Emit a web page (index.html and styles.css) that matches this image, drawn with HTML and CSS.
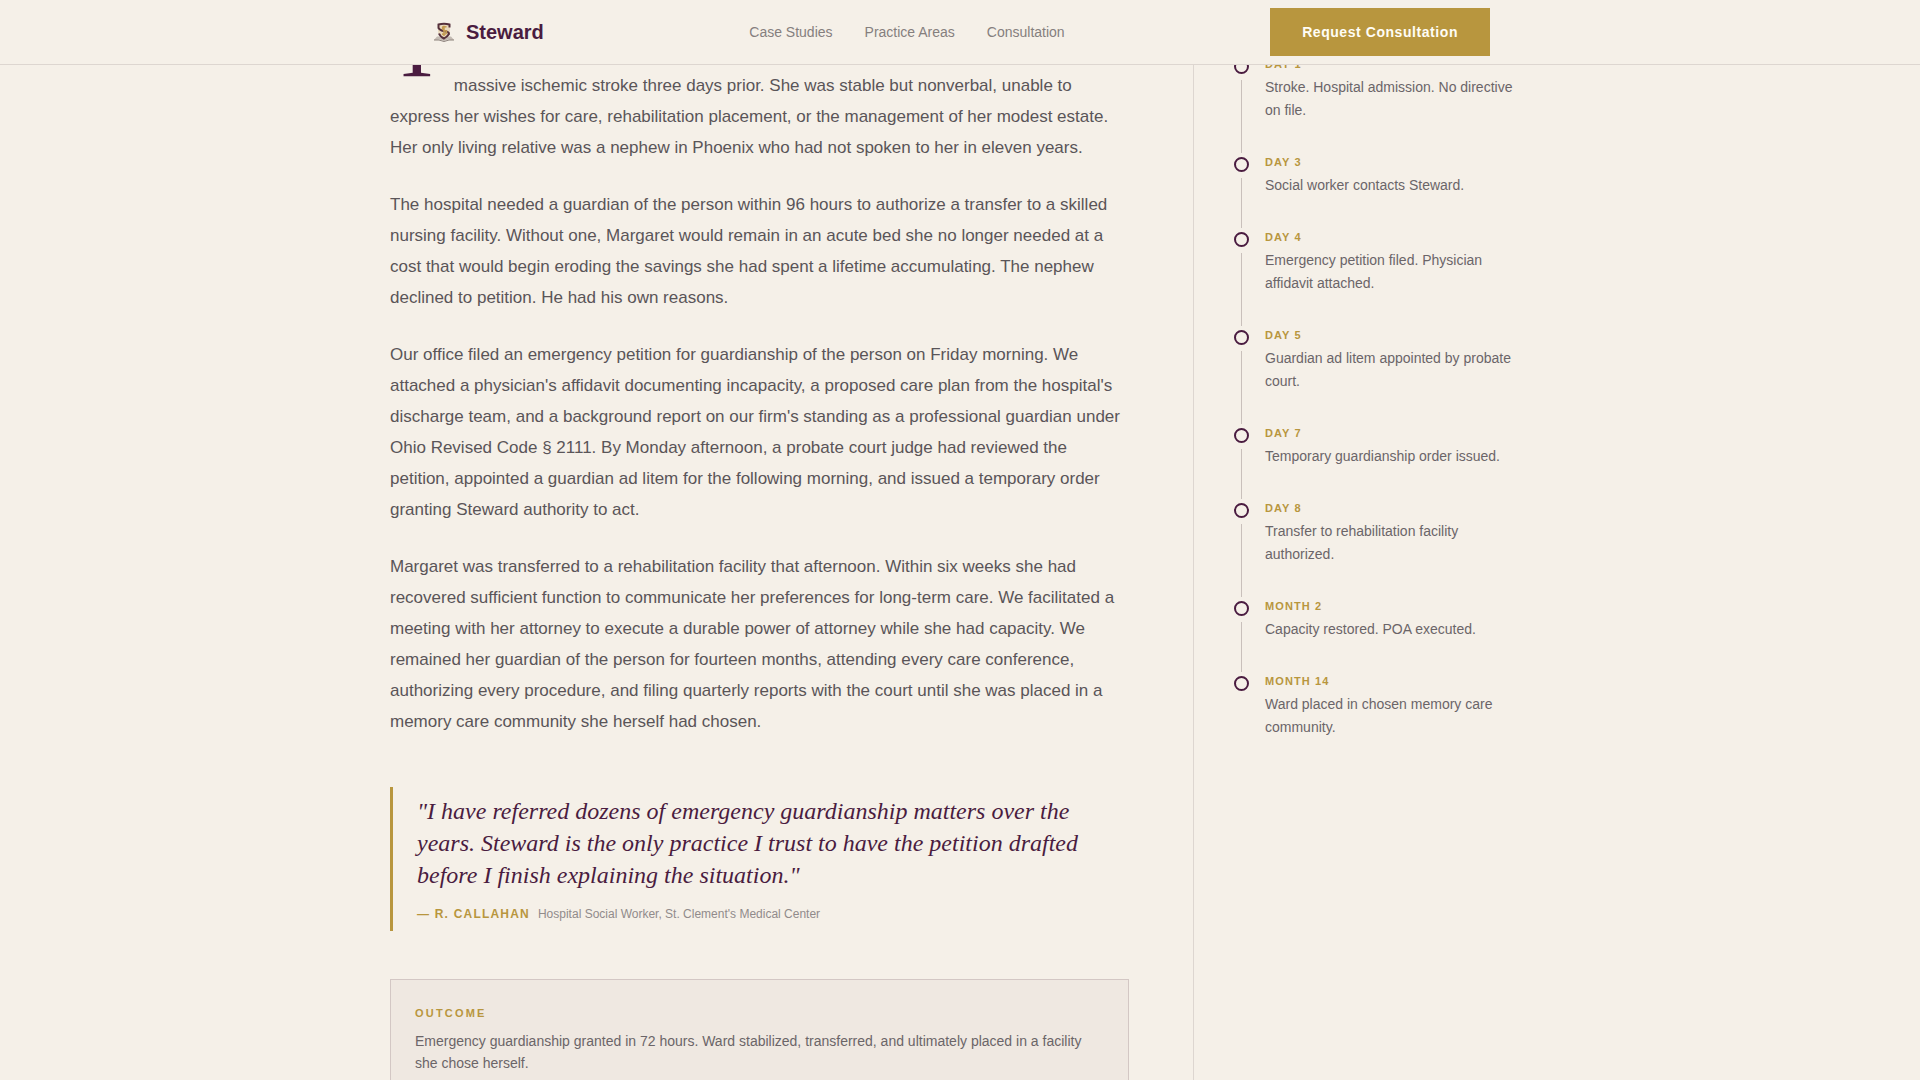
FILE: index.html
```html
<!DOCTYPE html>
<html lang="en">

<head>
  <meta charset="UTF-8">
  <meta name="viewport" content="width=device-width, initial-scale=1.0">
  <title>Steward</title>
  <link rel="stylesheet" href="styles.css">
</head>

<body>
  <header class="site-header">
    <div class="header-inner">
      <a class="logo" href="#">
        <svg class="logo-mark" viewBox="0 0 28 28" aria-hidden="true">
          <path d="M7 18.500l-3 3.500 6-.5 4 1.500 4-1.500 6 .5-3-3.500z" fill="#c4bbb3" />
          <path d="M4 22h5l5 1.500 5-1.500h5" fill="none" stroke="#8c817b" />
          <path d="M8 6q6-1.500 12 0v7q0 5-6 8-6-3-6-8z" fill="#ead9bd" />
          <path d="M19.500 9.500V6.500q-5.500-1.500-11 0V10q1 2 5 3 6 1 5.500 3-1.500 2.500-5 4.500-4-2-5-5" fill="none" stroke="#55303b" stroke-width="2" />
          <path d="M16.500 9q-4-1.500-4 1t4 3q1 4-4.500 3M14 8v10" fill="none" stroke="#c39a50" stroke-width="1.500" />
        </svg>
        <span>Steward</span>
      </a>
      <nav class="main-nav">
        <a href="#">Case Studies</a>
        <a href="#">Practice Areas</a>
        <a href="#">Consultation</a>
      </nav>
      <button class="cta" type="button">Request Consultation</button>
    </div>
  </header>

  <main class="case-layout">
    <article class="case-body">
      <p><span class="drop-cap">T</span>massive ischemic stroke three days prior. She was stable but nonverbal, unable to
        express her wishes for care, rehabilitation placement, or the management of her modest estate. Her only living
        relative was a nephew in Phoenix who had not spoken to her in eleven years.</p>

      <p>The hospital needed a guardian of the person within 96 hours to authorize a transfer to a skilled nursing
        facility. Without one, Margaret would remain in an acute bed she no longer needed at a cost that would begin
        eroding the savings she had spent a lifetime accumulating. The nephew declined to petition. He had his own
        reasons.</p>

      <p>Our office filed an emergency petition for guardianship of the person on Friday morning. We attached a
        physician's affidavit documenting incapacity, a proposed care plan from the hospital's discharge team, and a
        background report on our firm's standing as a professional guardian under Ohio Revised Code § 2111. By Monday
        afternoon, a probate court judge had reviewed the petition, appointed a guardian ad litem for the following
        morning, and issued a temporary order granting Steward authority to act.</p>

      <p>Margaret was transferred to a rehabilitation facility that afternoon. Within six weeks she had recovered
        sufficient function to communicate her preferences for long-term care. We facilitated a meeting with her
        attorney to execute a durable power of attorney while she had capacity. We remained her guardian of the person
        for fourteen months, attending every care conference, authorizing every procedure, and filing quarterly reports
        with the court until she was placed in a memory care community she herself had chosen.</p>

      <blockquote class="pull-quote">
        <div class="quote-text">"I have referred dozens of emergency guardianship matters over the years. Steward is the
          only practice I trust to have the petition drafted before I finish explaining the situation."</div>
        <footer class="quote-source"><cite>— R. Callahan</cite><span>Hospital Social Worker, St. Clement's Medical
            Center</span></footer>
      </blockquote>

      <section class="outcome">
        <h2>Outcome</h2>
        <div>Emergency guardianship granted in 72 hours. Ward stabilized, transferred, and ultimately placed in a
          facility she chose herself.</div>
      </section>
    </article>

    <aside class="sidebar">
      <ol class="timeline">
        <li>
          <h3>Day 1</h3>
          <div>Stroke. Hospital admission. No directive on file.</div>
        </li>
        <li>
          <h3>Day 3</h3>
          <div>Social worker contacts Steward.</div>
        </li>
        <li>
          <h3>Day 4</h3>
          <div>Emergency petition filed. Physician affidavit attached.</div>
        </li>
        <li>
          <h3>Day 5</h3>
          <div>Guardian ad litem appointed by probate court.</div>
        </li>
        <li>
          <h3>Day 7</h3>
          <div>Temporary guardianship order issued.</div>
        </li>
        <li>
          <h3>Day 8</h3>
          <div>Transfer to rehabilitation facility authorized.</div>
        </li>
        <li>
          <h3>Month 2</h3>
          <div>Capacity restored. POA executed.</div>
        </li>
        <li>
          <h3>Month 14</h3>
          <div>Ward placed in chosen memory care community.</div>
        </li>
      </ol>
    </aside>
  </main>
</body>

</html>
```
FILE: styles.css
```css
*,
*::before,
*::after {
  box-sizing: border-box;
}

body {
  margin: 0;
  height: 100vh;
  overflow: hidden;
  background-color: #f5f0e8;
  color: #5a5558;
  font-family: "Liberation Sans", Arial, sans-serif;
}

h2,
h3,
p,
blockquote,
ol {
  margin: 0;
  padding: 0;
}

/* Header */

.site-header {
  position: fixed;
  top: 0;
  left: 0;
  right: 0;
  z-index: 10;
  background-color: #f5f0e8;
  border-bottom: 1px solid #ddd6d0;
}

.header-inner {
  display: flex;
  justify-content: space-between;
  align-items: center;
  max-width: 1140px;
  height: 64px;
  margin: 0 auto;
  padding: 0 40px;
}

.logo {
  display: flex;
  align-items: center;
  gap: 8px;
  color: #4a1c40;
  font-size: 20px;
  font-weight: bold;
  text-decoration: none;
}

.logo-mark {
  width: 28px;
  height: 28px;
}

.main-nav {
  display: flex;
  gap: 32px;
}

.main-nav a {
  color: #857f7e;
  font-size: 14px;
  text-decoration: none;
}

.cta {
  height: 48px;
  padding: 0 32px;
  border: none;
  background-color: #b8963e;
  color: #fffdf5;
  font-family: inherit;
  font-size: 14px;
  font-weight: bold;
  letter-spacing: 0.04em;
}

/* Case study */

.case-layout {
  display: grid;
  grid-template-columns: 1fr 337px;
  gap: 64px;
  max-width: 1140px;
  min-height: 100vh;
  margin: 0 auto;
  padding-top: 55px;
}

.case-body {
  padding-top: 15px;
}

.case-body p {
  margin-bottom: 26px;
  font-size: 17px;
  line-height: 31px;
}

.drop-cap {
  float: left;
  margin: -55px 10px 0 0;
  color: #4a1c40;
  font-family: "Liberation Serif", Georgia, serif;
  font-size: 88px;
  line-height: 64px;
}

.pull-quote {
  margin: 50px 0 48px;
  padding: 8px 0 8px 24px;
  border-left: 3px solid #b8963e;
}

.quote-text {
  color: #4a1c40;
  font-family: "Liberation Serif", Georgia, serif;
  font-size: 24px;
  font-style: italic;
  line-height: 32px;
}

.quote-source {
  display: flex;
  gap: 8px;
  margin-top: 14px;
  color: #918b8b;
  font-size: 12px;
  line-height: 18px;
}

.quote-source cite {
  color: #b8963e;
  font-style: normal;
  font-weight: bold;
  letter-spacing: 0.1em;
  text-transform: uppercase;
}

.outcome {
  padding: 24px;
  border: 1px solid #d3c7c4;
  background-color: #efe8e1;
  color: #6b6568;
  font-size: 14px;
  line-height: 22px;
}

.outcome h2 {
  margin-bottom: 8px;
  color: #b8963e;
  font-size: 11px;
  letter-spacing: 0.2em;
  line-height: 18px;
  text-transform: uppercase;
}

/* Timeline */

.sidebar {
  padding-left: 40px;
  border-left: 1px solid #ddd6d0;
}

.timeline {
  list-style: none;
}

.timeline li {
  display: grid;
  grid-template-columns: 15px 1fr;
  grid-template-rows: 21px auto;
  column-gap: 16px;
  padding-bottom: 31px;
  position: relative;
  color: #6b6568;
  font-size: 14px;
  line-height: 23px;
}

.timeline li::before {
  content: "";
  width: 15px;
  height: 15px;
  margin-top: 4px;
  border: 2px solid #4a1c40;
  border-radius: 50%;
}

/* connector down to the next dot */
.timeline li:not(:last-child)::after {
  content: "";
  position: absolute;
  top: 25px;
  bottom: 0;
  left: 7px;
  width: 1px;
  background-color: #c9c0bb;
}

.timeline h3 {
  color: #b8963e;
  font-size: 11px;
  letter-spacing: 0.1em;
  line-height: 18px;
  text-transform: uppercase;
}

.timeline div {
  grid-column: 2;
}
```
